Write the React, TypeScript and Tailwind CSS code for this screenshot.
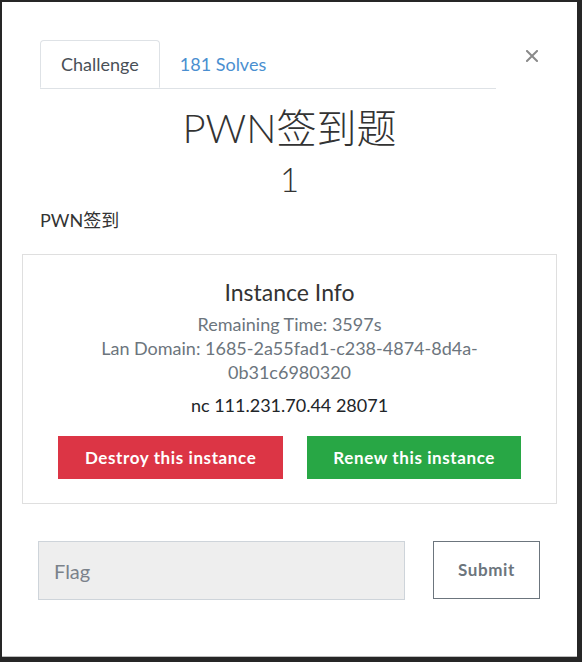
import React from "react";

const font = { fontFamily: '"Lato", "Noto Sans CJK SC", sans-serif' };

export default function App() {
  return (
    <div className="w-[582px] h-[662px] bg-[#262626] pt-[2px] pl-[2px] pr-[5px] pb-[5px]" style={font}>
      <div className="h-full bg-white border-b border-[#bdbdbd] flex flex-col">
        {/* header with tabs and close */}
        <div className="flex items-start pl-[38px] pt-[38px]">
          <ul className="flex w-[456px] border-b border-[#dee2e6]">
            <li className="h-[48px] px-[20px] flex items-center border border-[#dee2e6] border-b-white rounded-t-[4px] -mb-px text-[18px] text-[#495057] bg-white">
              Challenge
            </li>
            <li className="h-[48px] px-[20px] flex items-center text-[18px] text-[#4a8fd0]">181 Solves</li>
          </ul>
          <button className="ml-[30px] mt-[10px] w-[12px] h-[12px] text-[#8a8a8a]">
            <svg viewBox="0 0 12 12" width="12" height="12">
              <path d="M1 1L11 11M11 1L1 11" stroke="currentColor" strokeWidth="2" strokeLinecap="square" />
            </svg>
          </button>
        </div>

        {/* title */}
        <h1 className="mt-[16px] text-center text-[40px] leading-[46px] font-light text-[#333]">PWN签到题</h1>
        <h2 className="mt-[8px] text-center text-[33px] leading-[40px] font-light text-[#333]">1</h2>
        <p className="mt-[9px] pl-[38px] text-[18px] leading-[24px] text-[#333]">PWN签到</p>

        {/* instance box */}
        <div className="mt-[22px] mx-[20px] border border-[#dfdfdf] pt-[24px] pb-[24px] flex flex-col items-center">
          <h4 className="text-[23px] leading-[27px] text-[#333]">Instance Info</h4>
          <p className="mt-[6px] text-[18px] leading-[24px] text-[#6c757d]">Remaining Time: 3597s</p>
          <p className="max-w-[440px] text-center text-[18px] leading-[24px] text-[#6c757d]">
            Lan Domain: 1685-2a55fad1-c238-4874-8d4a-0b31c6980320
          </p>
          <p className="mt-[9px] text-[18px] leading-[24px] text-[#212529]">nc 111.231.70.44 28071</p>
          <div className="mt-[19px] flex gap-[24px]">
            <button className="h-[43px] px-[27px] bg-[#dc3545] text-white text-[17px] font-bold tracking-[0.6px]">
              Destroy this instance
            </button>
            <button className="h-[43px] px-[26px] bg-[#28a745] text-white text-[17px] font-bold tracking-[0.6px]">
              Renew this instance
            </button>
          </div>
        </div>

        {/* flag form */}
        <div className="mt-[37px] pl-[36px] flex items-start gap-[28px]">
          <input
            placeholder="Flag"
            className="w-[367px] h-[59px] bg-[#eeeeee] border border-[#ced4da] pl-[15px] text-[20px] placeholder:text-[#7b828a] outline-none"
            style={font}
          />
          <button className="w-[107px] h-[58px] border border-[#6c757d] text-[17px] font-bold tracking-[0.6px] text-[#6c757d]">
            Submit
          </button>
        </div>
      </div>
    </div>
  );
}
